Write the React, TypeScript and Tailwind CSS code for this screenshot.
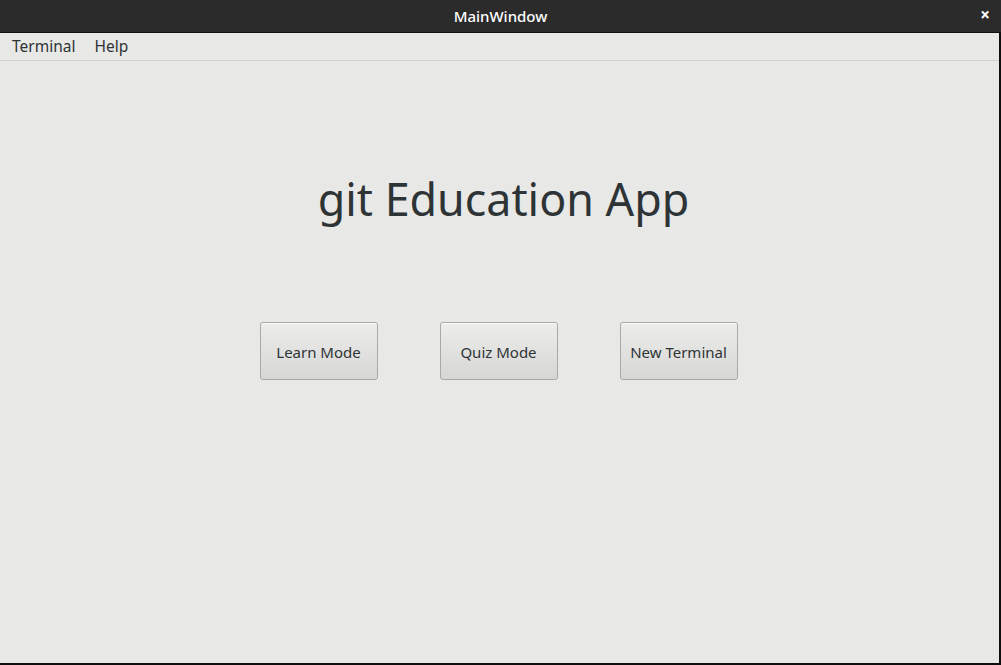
export default function App() {
  const font = { fontFamily: '"Noto Sans", "Open Sans", sans-serif' };
  const buttons = ["Learn Mode", "Quiz Mode", "New Terminal"];
  return (
    <div className="h-[665px] w-[1001px] bg-[#0e0e0e] flex flex-col" style={font}>
      <div className="h-[33px] shrink-0 bg-[#2b2b2b] flex items-center justify-center relative border-b border-[#111]">
        <span className="text-white text-[15px] font-medium">MainWindow</span>
        <span className="absolute right-[11px] top-[6px] text-white text-[17px] font-bold leading-none">×</span>
      </div>
      <div className="flex-1 mr-[2px] mb-[2px] bg-[#e8e8e7] flex flex-col">
        <div className="h-[28px] flex items-center gap-[19px] px-[12px] border-b border-[#d2d2d0] text-[15.5px] text-[#2e3436]">
          <span>Terminal</span>
          <span>Help</span>
        </div>
        <div className="flex flex-col items-center">
          <h1 className="mt-[108px] ml-[8px] text-[44.8px] leading-[60px] text-[#2e3436]">git Education App</h1>
          <div className="mt-[93px] ml-[-2px] flex gap-[62px]">
            {buttons.map((b) => (
              <button
                key={b}
                className="w-[118px] h-[58px] pt-[2px] rounded-[3px] border border-[#a9a9a7] bg-gradient-to-b from-[#ededec] to-[#d6d6d4] text-[15px] text-[#2e3436] shadow-[0_1px_0_rgba(255,255,255,0.8)_inset]"
              >
                {b}
              </button>
            ))}
          </div>
        </div>
      </div>
    </div>
  );
}
